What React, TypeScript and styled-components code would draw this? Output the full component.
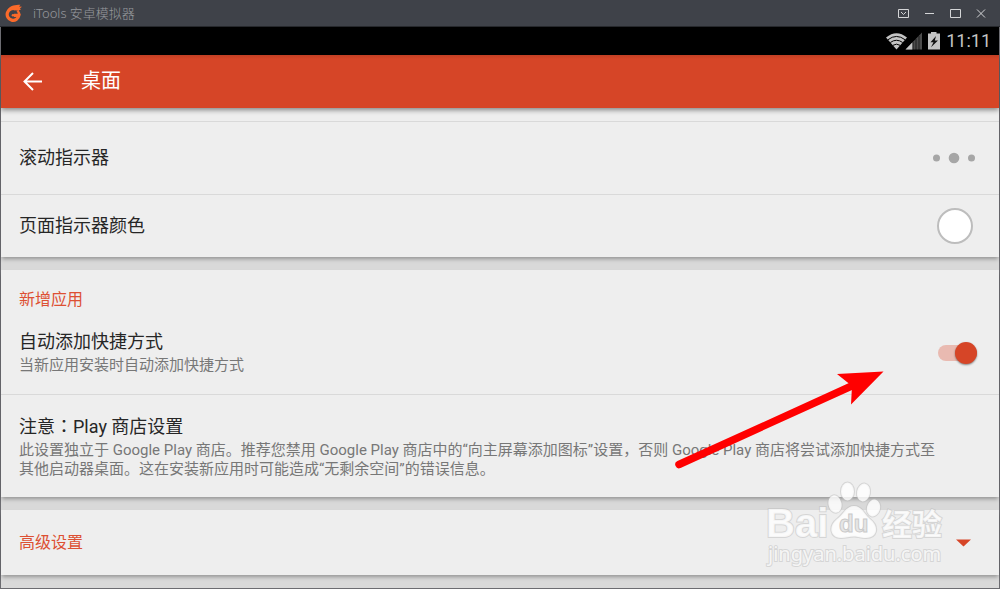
import React from 'react';
import styled, { createGlobalStyle } from 'styled-components';

const sans = `Roboto, 'Noto Sans CJK SC', sans-serif`;
const accent = '#d64527';

const GlobalStyle = createGlobalStyle`
  * { box-sizing: border-box; }
  body { margin: 0; background: #d9d9d9; font-family: ${sans}; color: #262626; }
  button { border: 0; padding: 0; margin: 0; background: none; font: inherit; color: inherit; cursor: pointer; }
  h1, h2, h3, p { margin: 0; font-weight: 400; }
  svg { display: block; }
`;

const Window = styled.div`
  position: relative;
  display: flex;
  flex-direction: column;
  min-height: 100vh;
  overflow: hidden;
`;

const TitleBar = styled.header`
  display: flex;
  align-items: center;
  height: 27px;
  padding: 0 11px 0 4px;
  background: #3f4249;
  color: #97999d;
  border-bottom: 1px solid #26282c;
`;

const AppName = styled.span`
  flex: 1;
  margin-left: 11px;
  font-family: 'Noto Sans', 'Noto Sans CJK SC', sans-serif;
  font-size: 13px;
  line-height: 16px;
  font-weight: 300;
`;

const WindowControls = styled.div`
  display: flex;
  gap: 10px;
  color: #d4d5d7;
`;

const Screen = styled.main`
  flex: 1;
  display: flex;
  flex-direction: column;
  background: #d9d9d9;
  border: solid #6c6c71;
  border-width: 0 1px 1px;
`;

const StatusBar = styled.div`
  display: flex;
  align-items: center;
  justify-content: flex-end;
  height: 28px;
  padding-right: 8px;
  background: #000;
  color: #c4c4c4;
`;

const Clock = styled.time`
  margin-left: 5px;
  font-size: 18px;
  line-height: 28px;
`;

const Toolbar = styled.div`
  position: relative;
  display: flex;
  align-items: center;
  gap: 36px;
  height: 53px;
  padding: 0 18px 1px;
  background: linear-gradient(#c03f24, ${accent} 4px);
  color: #fff;
  box-shadow: 0 2px 5px rgba(0, 0, 0, 0.45);
`;

const ToolbarTitle = styled.h1`
  font-size: 20px;
  line-height: 28px;
`;

const Card = styled.section`
  margin-bottom: 13px;
  background: #eee;
  box-shadow: 0 3px 4px -1px rgba(0, 0, 0, 0.32);
`;

const Row = styled.div<{ $height: number }>`
  display: flex;
  align-items: center;
  justify-content: space-between;
  min-height: ${(p) => p.$height}px;
  padding: 0 22px 0 18px;
  & + & { border-top: 1px solid #d9d9d9; }
`;

const RowText = styled.div`
  display: flex;
  flex-direction: column;
  gap: 1px;
  padding-bottom: 2px;
`;

const Title = styled.label`
  font-size: 18px;
  line-height: 26px;
`;

const Description = styled.p`
  padding-right: 36px;
  font-size: 15px;
  line-height: 19px;
  color: #777;
`;

/* Full-width punctuation that sits in the middle of its square. */
const CenteredMark = styled.span`
  font-family: 'Noto Sans CJK TC', sans-serif;
`;

const SectionHeading = styled.h2`
  font-size: 16px;
  line-height: 24px;
  color: #dd5033;
`;

const HeadingRow = styled.div`
  padding: 18px 18px 0;
`;

const ColorSwatch = styled.button`
  width: 36px;
  height: 36px;
  margin-right: 4px;
  border: 2px solid #bdbdbd;
  border-radius: 50%;
  background: #fff;
`;

const Switch = styled.input`
  appearance: none;
  display: flex;
  align-items: center;
  justify-content: flex-end;
  width: 39px;
  height: 16px;
  margin: 0;
  border-radius: 8px;
  background: #e9bab1;
  &::before {
    content: '';
    width: 22px;
    height: 22px;
    border-radius: 50%;
    background: ${accent};
    box-shadow: 0 1px 2px rgba(0, 0, 0, 0.45);
  }
  &:not(:checked) { justify-content: flex-start; background: #bbb; }
`;

const Expander = styled.button`
  display: flex;
  align-items: center;
  justify-content: space-between;
  width: 100%;
  min-height: 65px;
  padding: 1px 28px 0 18px;
`;

const ArrowMark = styled.svg`
  position: absolute;
  top: 360px;
  right: 110px;
  pointer-events: none;
`;

const Watermark = styled.svg`
  position: absolute;
  top: 478px;
  right: 50px;
  pointer-events: none;
`;

const Logo = () => (
  <svg width="18" height="18" viewBox="0 0 18 18" fill="none" aria-hidden="true">
    <path d="M11.500 5A5.900 5.900 0 1 0 14.900 11.300H10" stroke="#fb6a2a" strokeWidth="3.200" />
    <path d="M14.900 11.500A5.900 5.900 0 0 0 13.500 6.500" stroke="#fb6a2a" strokeWidth="2.400" />
    <path d="M4 4.800C7 1.600 11 .8 16.500 .8L15 2.400L18 2.700L15.800 4.600L17 5.200C15.500 6.600 13 7 10.500 6Z" fill="#fb6a2a" />
    <circle cx="9" cy="11.200" r="1.300" fill="#fb6a2a" />
  </svg>
);

const windowIcons: [string, React.ReactNode][] = [
  ['菜单', <><path d="M3.500 4.500h10v8h-10z" /><path d="M6 7l2.500 2.500L11 7" /></>],
  ['最小化', <path d="M4 8.500h9" />],
  ['最大化', <path d="M3.500 4.500h10v8h-10z" />],
  ['关闭', <path d="M4 4.500l8 8M12 4.500l-8 8" />],
];

const StatusIcons = () => (
  <svg width="56" height="20" viewBox="0 0 56 20" aria-hidden="true">
    <path d="M1 6.500Q11.500-2 22 6.500L11.500 18.500Z" fill="#c4c4c4" />
    <path d="M3 8.700Q11.500 2.200 20 8.700M5.300 11.500Q11.500 7 17.700 11.500M8 14.300Q11.500 12 15 14.300" fill="none" stroke="#000" strokeWidth="1" />
    <path d="M20.500 18.500L37 1.500V18.500Z" fill="#4c4c4c" />
    <path d="M20.500 18.500L27.500 11.300V18.500Z" fill="#c4c4c4" />
    <path d="M28 11v8M31 8v11M34 5v14" stroke="#000" strokeOpacity=".6" fill="none" />
    <path d="M43 2.500h3V1h5.500v1.500H55v16H43z" fill="#c4c4c4" />
    <path d="M51 5L45.500 11.200h3l-2.500 5L53 9.500h-3.200z" fill="#111" />
  </svg>
);

export default function App() {
  return (
    <>
      <GlobalStyle />
      <Window>
        <TitleBar>
          <Logo />
          <AppName>iTools 安卓模拟器</AppName>
          <WindowControls>
            {windowIcons.map(([name, icon]) => (
              <button key={name} aria-label={name}>
                <svg width="16" height="17" viewBox="0 0 16 17" fill="none" stroke="currentColor">{icon}</svg>
              </button>
            ))}
          </WindowControls>
        </TitleBar>
        <Screen>
          <StatusBar>
            <StatusIcons />
            <Clock>11:11</Clock>
          </StatusBar>
          <Toolbar>
            <button aria-label="返回">
              <svg width="26" height="26" viewBox="0 0 26 26" fill="none" stroke="currentColor" strokeWidth="2">
                <path d="M23 13.500H6M14 5L5.500 13.500L14 22" />
              </svg>
            </button>
            <ToolbarTitle>桌面</ToolbarTitle>
          </Toolbar>
          <Card>
            <Row $height={13} />
            <Row $height={73}>
              <Title as="h3">滚动指示器</Title>
              <svg width="44" height="12" viewBox="0 0 44 12" fill="#a6a6a6" aria-hidden="true">
                <circle cx="3.500" cy="6" r="3.500" />
                <circle cx="21" cy="6" r="5.300" />
                <circle cx="38.500" cy="6" r="3.500" />
              </svg>
            </Row>
            <Row $height={63}>
              <Title htmlFor="indicator-color">页面指示器颜色</Title>
              <ColorSwatch id="indicator-color" />
            </Row>
          </Card>
          <Card>
            <HeadingRow><SectionHeading>新增应用</SectionHeading></HeadingRow>
            <Row $height={82}>
              <RowText>
                <Title htmlFor="auto-add">自动添加快捷方式</Title>
                <Description>当新应用安装时自动添加快捷方式</Description>
              </RowText>
              <Switch id="auto-add" type="checkbox" role="switch" defaultChecked />
            </Row>
            <Row $height={103}>
              <RowText>
                <Title as="h3">注意<CenteredMark>：</CenteredMark>Play 商店设置</Title>
                <Description>
                  此设置独立于 Google Play 商店。推荐您禁用 Google Play 商店中的“向主屏幕添加图标”设置，否则 Google Play 商店将尝试添加快捷方式至其他启动器桌面。这在安装新应用时可能造成“无剩余空间”的错误信息。
                </Description>
              </RowText>
            </Row>
          </Card>
          <Card>
            <Expander aria-expanded="false">
              <SectionHeading as="span">高级设置</SectionHeading>
              <svg width="15" height="8" viewBox="0 0 15 8" fill={accent} aria-hidden="true"><path d="M0 .5H15L7.500 7.500Z" /></svg>
            </Expander>
          </Card>
        </Screen>
        <ArrowMark width="220" height="116" viewBox="670 360 220 116" aria-hidden="true">
          <path d="M679 464.500L856 384" stroke="#f00" strokeWidth="7.500" strokeLinecap="round" />
          <path d="M883.500 371.500L837 374L852 386L851 404.500Z" fill="#f00" />
        </ArrowMark>
        <Watermark width="190" height="92" viewBox="760 478 190 92">
          <g fill="#fff" fillOpacity=".8" stroke="#bdbdbd" strokeOpacity=".5" strokeWidth="2" paintOrder="stroke">
            <text x="766" y="537" fontFamily="'Liberation Sans'" fontWeight="700" fontSize="40">Bai</text>
            <ellipse cx="835" cy="504" rx="6.500" ry="8.800" transform="rotate(-12 835 504)" />
            <ellipse cx="847.500" cy="491.500" rx="6.500" ry="9" />
            <ellipse cx="863.500" cy="492.500" rx="6.500" ry="9" transform="rotate(10 863.500 492.500)" />
            <ellipse cx="873.500" cy="508" rx="6.500" ry="8.500" transform="rotate(15 873.500 508)" />
            <path d="M854 506C862 506 864 514 870 519C880 527 877 538 866 538C860 538 858 536.500 854 536.500C849 536.500 846 538 841 538C830 538 828 526 837 519C844 514 846 506 854 506Z" />
            <text x="882" y="535" fontFamily="'Noto Sans CJK SC'" fontWeight="700" fontSize="30">经验</text>
            <text x="768" y="561" fontFamily="'Noto Sans', sans-serif" fontSize="20">jingyan.baidu.com</text>
          </g>
          <text x="839" y="532" fontFamily="'Liberation Sans'" fontWeight="700" fontSize="24" fill="#e6e6e6" stroke="#cacaca" strokeWidth="1">du</text>
        </Watermark>
      </Window>
    </>
  );
}
